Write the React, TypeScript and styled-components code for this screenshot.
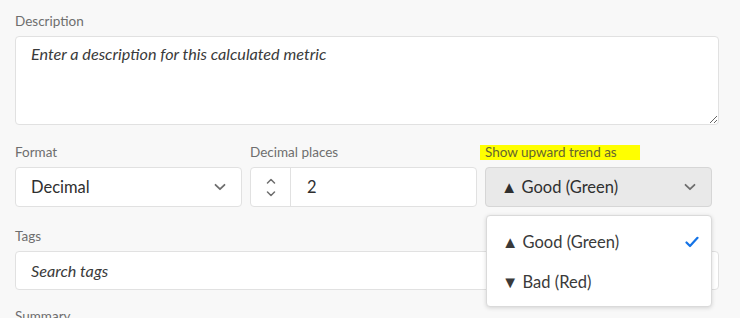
import React from "react";
import styled, { createGlobalStyle } from "styled-components";

const Global = createGlobalStyle`
  html, body { margin: 0; padding: 0; background: #f8f8f8; }
  body { font-family: Lato, "Noto Sans", sans-serif; overflow: hidden; }
  * { box-sizing: border-box; }
`;

const Page = styled.div`
  width: 740px;
  height: 318px;
  padding: 12px 21px 0 15px;
  overflow: hidden;
`;

const Label = styled.div<{ $top?: number }>`
  font-size: 13.5px;
  line-height: 18px;
  color: #6e6e6e;
  margin-top: ${(p) => p.$top ?? 0}px;
  margin-bottom: 6px;
  white-space: nowrap;
`;

const Highlight = styled.span`
  background: #ffff00;
  margin-left: -5px;
  padding: 0 23px 0 5px;
  display: inline-block;
  line-height: 15px;
  color: #65652f;
`;

const TextArea = styled.textarea`
  display: block;
  width: 704px;
  height: 89px;
  margin: 2px 0 0;
  border: 1px solid #e1e1e1;
  border-radius: 4px;
  background: #fff;
  padding: 7px 15px;
  font-family: Lato, sans-serif;
  font-size: 16.2px;
  color: #2c2c2c;
  resize: vertical;
  outline: none;
  &::placeholder {
    font-style: italic;
    color: #3a3a3a;
    opacity: 1;
  }
`;

const Row = styled.div`
  display: grid;
  grid-template-columns: 227px 227px 227px;
  column-gap: 8px;
  margin-top: 18px;
`;

const Field = styled.div`
  position: relative;
  display: flex;
  flex-direction: column;
`;

const Box = styled.div<{ $open?: boolean }>`
  height: 40px;
  border: 1px solid ${(p) => (p.$open ? "#d6d6d6" : "#e1e1e1")};
  background: ${(p) => (p.$open ? "#e9e9e9" : "#fff")};
  border-radius: 4px;
  display: flex;
  align-items: center;
`;

const SelectText = styled.span`
  flex: 1;
  padding-left: 15px;
  font-size: 16.5px;
  color: #2f2f2f;
  white-space: nowrap;
`;

const Chevron = styled.svg`
  width: 12px;
  height: 8px;
  margin-right: 15px;
  flex: none;
`;

const Stepper = styled.div`
  width: 40px;
  height: 100%;
  border-right: 1px solid #e1e1e1;
  display: flex;
  flex-direction: column;
  align-items: center;
  justify-content: center;
  gap: 7px;
`;

const NumberText = styled.span`
  padding-left: 16px;
  font-size: 16.5px;
  color: #2f2f2f;
`;

const Input = styled.input`
  display: block;
  width: 704px;
  height: 39px;
  border: 1px solid #e1e1e1;
  border-radius: 4px;
  background: #fff;
  padding: 0 15px;
  font-family: Lato, sans-serif;
  font-size: 16.2px;
  outline: none;
  &::placeholder {
    font-style: italic;
    color: #3a3a3a;
    opacity: 1;
  }
`;

const Popover = styled.div`
  position: absolute;
  top: 72px;
  left: 1px;
  width: 226px;
  height: 92px;
  background: #fff;
  border: 1px solid #dadada;
  border-radius: 4px;
  box-shadow: 0 1px 4px rgba(0, 0, 0, 0.15);
  padding: 6px 0;
  z-index: 5;
`;

const Item = styled.div`
  height: 40px;
  display: flex;
  align-items: center;
  padding: 0 12px 0 15px;
  font-size: 16.5px;
  color: #3a3a3a;
`;

const ItemText = styled.span`
  flex: 1;
`;

const ChevronDown = () => (
  <Chevron viewBox="0 0 12 8">
    <path d="M1.5 1.8 L6 6.2 L10.5 1.8" fill="none" stroke="#6e6e6e" strokeWidth="1.8" strokeLinecap="round" strokeLinejoin="round" />
  </Chevron>
);

const Small = styled.svg`
  width: 10px;
  height: 6px;
`;

const Check = styled.svg`
  width: 14px;
  height: 12px;
`;

export default function App() {
  return (
    <>
      <Global />
      <Page>
        <Label>Description</Label>
        <TextArea placeholder="Enter a description for this calculated metric" />
        <Row>
          <Field>
            <Label>Format</Label>
            <Box>
              <SelectText>Decimal</SelectText>
              <ChevronDown />
            </Box>
          </Field>
          <Field>
            <Label>Decimal places</Label>
            <Box>
              <Stepper>
                <Small viewBox="0 0 10 6">
                  <path d="M1.5 5 L5 1.5 L8.5 5" fill="none" stroke="#6e6e6e" strokeWidth="1.5" strokeLinecap="round" strokeLinejoin="round" />
                </Small>
                <Small viewBox="0 0 10 6">
                  <path d="M1.5 1 L5 4.5 L8.5 1" fill="none" stroke="#6e6e6e" strokeWidth="1.5" strokeLinecap="round" strokeLinejoin="round" />
                </Small>
              </Stepper>
              <NumberText>2</NumberText>
            </Box>
          </Field>
          <Field>
            <Label>
              <Highlight>Show upward trend as</Highlight>
            </Label>
            <Box $open>
              <SelectText>▲ Good (Green)</SelectText>
              <ChevronDown />
            </Box>
            <Popover>
              <Item>
                <ItemText>▲ Good (Green)</ItemText>
                <Check viewBox="0 0 14 12">
                  <path d="M1.5 6.5 L5 10 L12.5 1.8" fill="none" stroke="#1473e6" strokeWidth="2.2" strokeLinecap="round" strokeLinejoin="round" />
                </Check>
              </Item>
              <Item>
                <ItemText>▼ Bad (Red)</ItemText>
              </Item>
            </Popover>
          </Field>
        </Row>
        <Label $top={20}>Tags</Label>
        <Input placeholder="Search tags" />
        <Label $top={17}>Summary</Label>
      </Page>
    </>
  );
}
